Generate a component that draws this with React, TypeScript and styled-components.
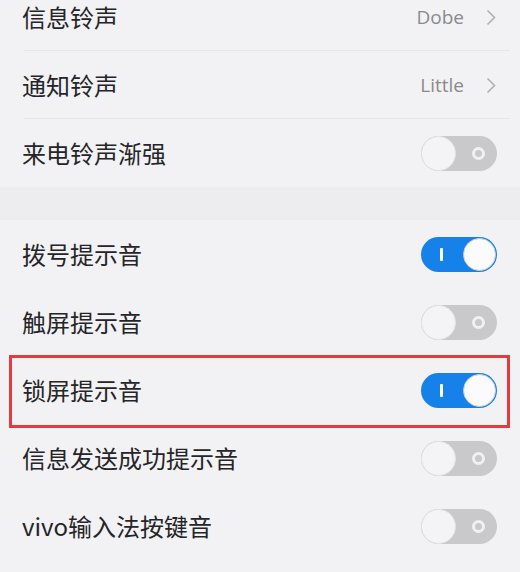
import React from 'react';
import styled, { createGlobalStyle } from 'styled-components';

const GlobalStyle = createGlobalStyle`
  html, body {
    margin: 0;
    padding: 0;
    background: #f2f2f5;
    overflow: hidden;
  }
  body {
    font-family: "Noto Sans CJK SC", "Noto Sans", sans-serif;
  }
`;

const Page = styled.div`
  width: 520px;
  height: 572px;
  overflow: hidden;
  background: #f2f2f5;
`;

const List = styled.div`
  display: flex;
  flex-direction: column;
  margin-top: -17px;
`;

const Group = styled.div`
  display: flex;
  flex-direction: column;
`;

const GroupGap = styled.div`
  height: 33px;
  background: #ededf0;
`;

const Row = styled.div<{ $divider?: boolean; $highlight?: boolean }>`
  position: relative;
  height: 68px;
  display: flex;
  align-items: center;
  justify-content: space-between;
  padding: 0 23px 0 22px;
  box-sizing: border-box;

  ${(p) =>
    p.$divider &&
    `
    &::after {
      content: '';
      position: absolute;
      left: 24px;
      right: 10px;
      bottom: 0;
      height: 1px;
      background: #e6e6ea;
    }
  `}

  ${(p) =>
    p.$highlight &&
    `
    &::before {
      content: '';
      position: absolute;
      left: 9px;
      right: 10px;
      top: -1px;
      bottom: -4px;
      border: 3px solid #e53a3f;
      pointer-events: none;
    }
  `}
`;

const Label = styled.span`
  font-size: 24px;
  color: #252527;
  line-height: 1;
`;

const Value = styled.span`
  display: flex;
  align-items: center;
  gap: 22px;
  font-family: "Open Sans", "Noto Sans", sans-serif;
  font-size: 19px;
  color: #8a8a8c;
`;

const Chevron = styled.svg`
  width: 10px;
  height: 17px;
  margin-right: 1px;
`;

const Track = styled.div<{ $on: boolean }>`
  position: relative;
  width: 76px;
  height: 35px;
  border-radius: 18px;
  background: ${(p) => (p.$on ? '#1682e9' : '#c9c9cb')};
  flex-shrink: 0;
`;

const Knob = styled.div<{ $on: boolean }>`
  position: absolute;
  top: ${(p) => (p.$on ? '1px' : '0')};
  ${(p) => (p.$on ? 'right: 1px;' : 'left: 0;')}
  width: ${(p) => (p.$on ? '33px' : '35px')};
  height: ${(p) => (p.$on ? '33px' : '35px')};
  border-radius: 50%;
  background: ${(p) => (p.$on ? '#fbfbfd' : '#f4f4f6')};
  box-sizing: border-box;
  border: 1px solid ${(p) => (p.$on ? '#c9cbd2' : '#e2e2e4')};
`;

const OnBar = styled.div`
  position: absolute;
  left: 19px;
  top: 11px;
  width: 3px;
  height: 13px;
  border-radius: 1px;
  background: #ffffff;
`;

const OffRing = styled.div`
  position: absolute;
  right: 12px;
  top: 11px;
  width: 13px;
  height: 13px;
  border-radius: 50%;
  box-sizing: border-box;
  border: 3px solid #f1f1f3;
  background: #c9c9cb;
`;

function Toggle({ on }: { on: boolean }) {
  return (
    <Track $on={on}>
      {on ? <OnBar /> : <OffRing />}
      <Knob $on={on} />
    </Track>
  );
}

function Arrow() {
  return (
    <Chevron viewBox="0 0 10 17">
      <path d="M1.5 1.5 L8.5 8.5 L1.5 15.5" fill="none" stroke="#b0b0b3" strokeWidth="1.6" />
    </Chevron>
  );
}

const firstGroup = [
  { label: '信息铃声', value: 'Dobe' },
  { label: '通知铃声', value: 'Little' },
  { label: '来电铃声渐强', toggle: false },
];

const secondGroup = [
  { label: '拨号提示音', on: true },
  { label: '触屏提示音', on: false },
  { label: '锁屏提示音', on: true, highlight: true },
  { label: '信息发送成功提示音', on: false },
  { label: 'vivo输入法按键音', on: false },
];

export default function App() {
  return (
    <Page>
      <GlobalStyle />
      <List>
        <Group>
          {firstGroup.map((item, i) => (
            <Row key={item.label} $divider={i < firstGroup.length - 1}>
              <Label>{item.label}</Label>
              {item.value ? (
                <Value>
                  {item.value}
                  <Arrow />
                </Value>
              ) : (
                <Toggle on={false} />
              )}
            </Row>
          ))}
        </Group>
        <GroupGap />
        <Group>
          {secondGroup.map((item) => (
            <Row key={item.label} $highlight={item.highlight}>
              <Label>{item.label}</Label>
              <Toggle on={item.on} />
            </Row>
          ))}
        </Group>
      </List>
    </Page>
  );
}
